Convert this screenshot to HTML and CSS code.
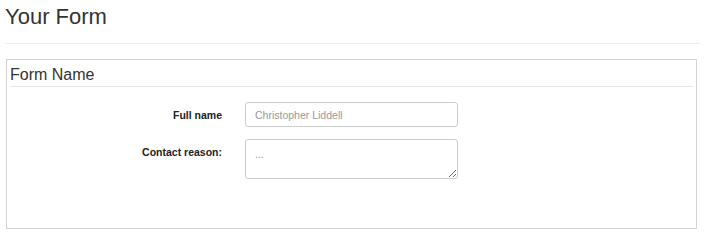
FILE: index.html
```html
<!DOCTYPE html>
<html>
<head lang="en">
    <meta charset="UTF-8">
    <title>Your Form</title>
    <link rel="stylesheet" href="styles.css">
</head>
<body>
<h1 class="page_title">Your Form</h1>
<hr class="page_rule"/>
<form class="form_box">
    <div class="legend">Form Name</div>
    <div class="form_row">
        <label class="form_label" for="full_name">Full name</label>
        <input class="form_input" id="full_name" type="text" placeholder="Christopher Liddell"/>
    </div>
    <div class="form_row">
        <label class="form_label" for="contact_reason">Contact reason:</label>
        <textarea class="form_area" id="contact_reason" placeholder="..."></textarea>
    </div>
</form>
</body>
</html>
```

FILE: styles.css
```css
* {
    margin: 0;
    padding: 0;
    box-sizing: border-box;
}
body {
    padding: 0 6px 0 5px;
    font-family: "Liberation Sans", Arial, sans-serif;
    color: #333;
    background-color: #fff;
}
.page_title {
    margin-top: 5px;
    font-size: 22px;
    font-weight: normal;
    line-height: 1.1;
}
.page_rule {
    margin: 14px 0 15px;
    border: 0;
    border-top: 1px solid #eee;
}
.form_box {
    margin: 0 3px 0 1px;
    height: 170px;
    border: 1px solid #d3d3d3;
}
.legend {
    margin: 0 3px 15px;
    padding: 5px 0 1px 0;
    font-size: 16px;
    line-height: 20px;
    border-bottom: 1px solid #e5e5e5;
}
.form_row {
    display: flex;
    align-items: flex-start;
    gap: 23px;
    margin-bottom: 12px;
}
.form_label {
    width: 215px;
    padding-top: 7px;
    text-align: right;
    font-size: 10.5px;
    font-weight: bold;
    line-height: 12px;
    color: #222;
}
.form_input, .form_area {
    width: 213px;
    padding: 6px 9px;
    border: 1px solid #ccc;
    border-radius: 3px;
    font-family: "Liberation Sans", Arial, sans-serif;
    font-size: 10.5px;
    line-height: 12px;
    color: #555;
    outline: none;
}
.form_input {
    height: 25px;
}
.form_area {
    height: 40px;
    padding-top: 8px;
    display: block;
}
.form_input::placeholder, .form_area::placeholder {
    color: #999;
}
```
